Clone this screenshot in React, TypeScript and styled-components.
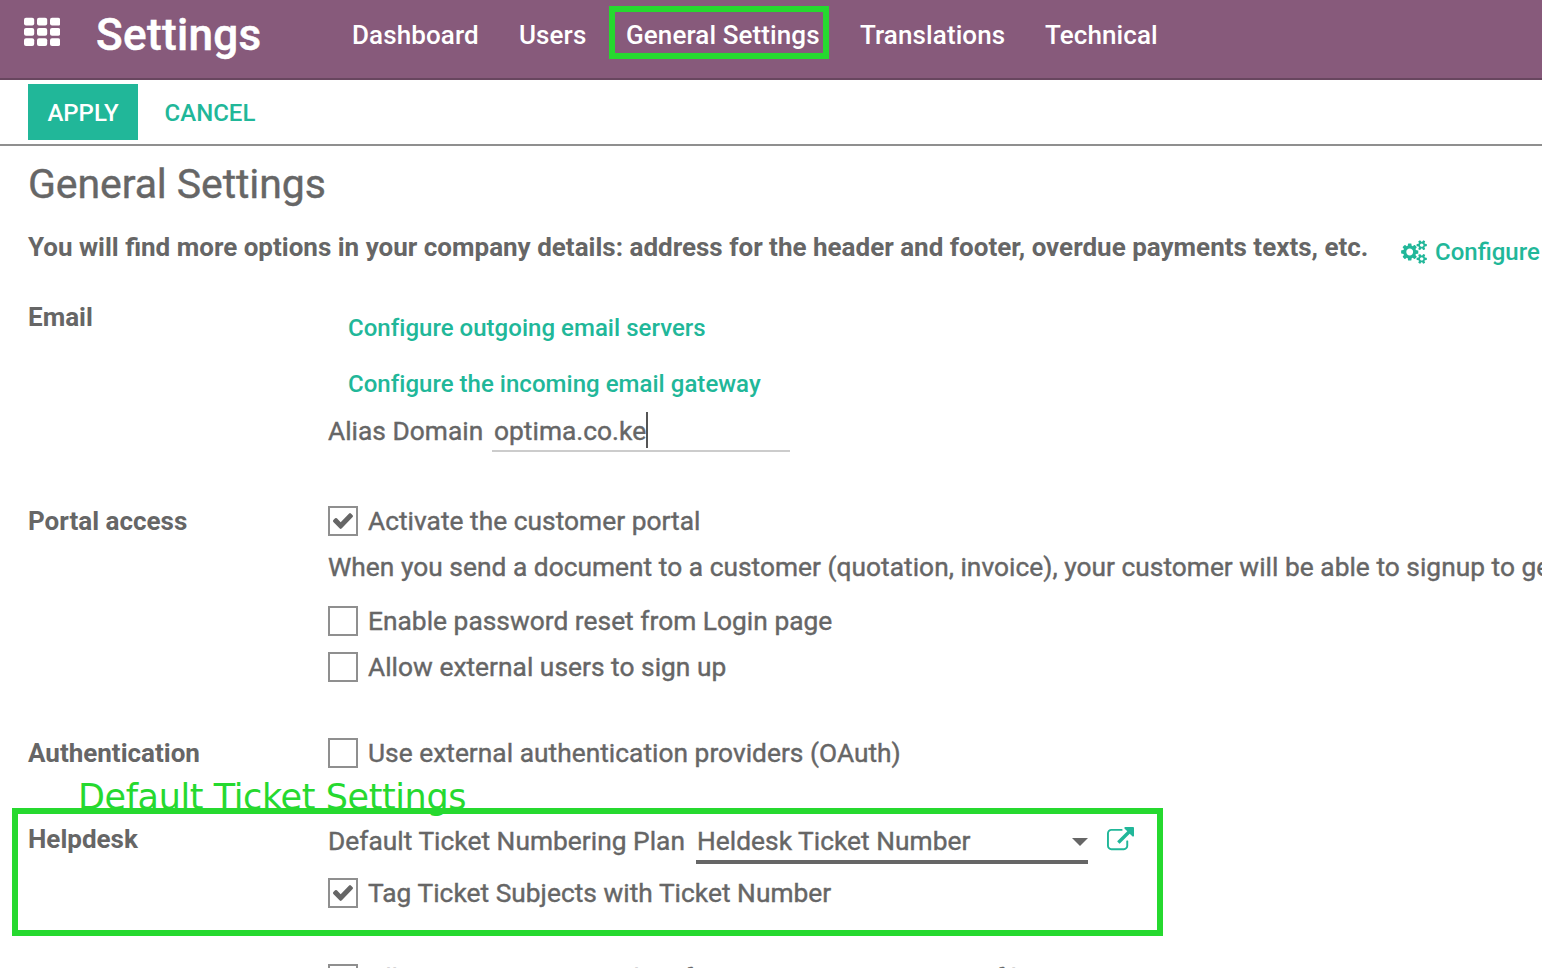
import React from 'react';
import styled, { createGlobalStyle } from 'styled-components';

const GREEN = '#26d92f';
const TEAL = '#21b799';
const GRAY = '#666666';

const GlobalStyle = createGlobalStyle`
  * { box-sizing: border-box; }
  html, body { margin: 0; padding: 0; overflow: hidden; background: #fff; }
  body { font-family: Roboto, "Liberation Sans", sans-serif; font-size: 26px; color: ${GRAY}; }
`;

const Page = styled.div`
  position: relative;
  width: 100%;
  height: 968px;
  overflow: hidden;
  background: #fff;
  line-height: 36px;
  white-space: nowrap;
`;

const NavBar = styled.header`
  display: flex;
  align-items: flex-start;
  height: 80px;
  padding: 17px 0 0 24px;
  background: #875a7b;
  border-bottom: 2px solid #68465f;
  color: #fff;
`;

const AppsIcon = styled.svg`
  display: block;
  width: 36px;
  height: 30px;
  margin-right: 36px;
  fill: #fff;
`;

const Brand = styled.div`
  width: 256px;
  font-size: 44px;
  font-weight: 500;
  letter-spacing: 0.35px;
  -webkit-text-stroke: 0.5px currentColor;
`;

const Menu = styled.nav`
  display: flex;
  gap: 40px;
`;

const MenuItem = styled.a<{ $width: number }>`
  position: relative;
  width: ${(p) => p.$width}px;
  font-weight: 500;
  letter-spacing: 0.1px;
`;

const MenuHighlight = styled.span`
  position: absolute;
  top: -11px;
  left: -17px;
  width: 220px;
  height: 53px;
  border: 6px solid ${GREEN};
`;

const ControlBar = styled.div`
  display: flex;
  align-items: flex-start;
  height: 66px;
  padding: 4px 0 0 28px;
  border-bottom: 2px solid #8f8f8f;
`;

const Button = styled.button<{ $primary?: boolean }>`
  height: 56px;
  width: ${(p) => (p.$primary ? '110px' : '144px')};
  padding: 2px 0 0;
  border: 0;
  font: 500 24px Roboto, sans-serif;
  text-align: center;
  background: ${(p) => (p.$primary ? TEAL : 'transparent')};
  color: ${(p) => (p.$primary ? '#fff' : TEAL)};
`;

const Sheet = styled.main`
  padding: 14px 0 0 28px;
`;

const Title = styled.h1`
  margin: 0;
  font-size: 41px;
  font-weight: 400;
  line-height: 48px;
  letter-spacing: -0.1px;
  -webkit-text-stroke: 0.4px currentColor;
`;

const InfoRow = styled.div`
  display: flex;
  height: 36px;
  margin: 21px 0 34px;
`;

const InfoText = styled.div`
  width: 1373px;
  font-weight: 700;
`;

const ConfigureLink = styled.a`
  display: flex;
  align-items: center;
  gap: 8px;
  margin-top: 5px;
  height: 36px;
  font-size: 24px;
  font-weight: 500;
  color: ${TEAL};
`;

const Section = styled.section<{ $after: number }>`
  display: grid;
  grid-template-columns: 300px 1fr;
  margin-bottom: ${(p) => p.$after}px;
`;

const Label = styled.div`
  font-weight: 700;
`;

const Fields = styled.div<{ $top?: number }>`
  display: flex;
  flex-direction: column;
  padding-top: ${(p) => p.$top ?? 0}px;
`;

const Row = styled.div<{ $gap?: number }>`
  display: flex;
  align-items: flex-start;
  margin-top: ${(p) => p.$gap ?? 0}px;
  font-size: 26.3px;
  letter-spacing: 0.03px;
  -webkit-text-stroke: 0.4px currentColor;
`;

const TextLink = styled.a<{ $gap?: number }>`
  margin: ${(p) => p.$gap ?? 0}px 0 0 20px;
  font-size: 24px;
  font-weight: 500;
  letter-spacing: 0.03px;
  color: ${TEAL};
`;

const FieldLabel = styled.span<{ $width: number }>`
  width: ${(p) => p.$width}px;
`;

const Input = styled.div`
  display: flex;
  width: 298px;
  height: 39px;
  padding-left: 2px;
  border-bottom: 2px solid #cccccc;
`;

const Caret = styled.span`
  width: 2px;
  height: 36px;
  margin-top: -1px;
  background: #555;
`;

const Select = styled.div`
  display: flex;
  justify-content: space-between;
  width: 392px;
  height: 41px;
  padding-left: 1px;
  border-bottom: 4px solid ${GRAY};
`;

const Arrow = styled.span`
  margin-top: 15px;
  width: 16px;
  height: 8px;
  background: ${GRAY};
  clip-path: polygon(0 0, 100% 0, 50% 100%);
`;

const Box = styled.span`
  display: flex;
  align-items: center;
  justify-content: center;
  width: 30px;
  height: 30px;
  margin: 3px 10px 0 0;
  border: 2px solid #8f8f8f;
`;

const CheckboxText = styled.span<{ $lineHeight: number }>`
  line-height: ${(p) => p.$lineHeight}px;
`;

const Glyph = styled.svg<{ $w: number; $h: number }>`
  display: block;
  width: ${(p) => p.$w}px;
  height: ${(p) => p.$h}px;
  fill: currentColor;
`;

const External = styled.span`
  margin: 4px 0 0 19px;
  color: ${TEAL};
`;

const HelpdeskHighlight = styled.div`
  position: absolute;
  left: 12px;
  top: 808px;
  width: 1151px;
  height: 128px;
  border: 6px solid ${GREEN};
`;

const HelpdeskNote = styled.div`
  position: absolute;
  left: 78px;
  top: 777px;
  font-family: "DejaVu Sans", sans-serif;
  font-size: 35px;
  line-height: 40px;
  letter-spacing: -0.4px;
  color: ${GREEN};
`;

const CHECK =
  'M1671 566q0 40-28 68l-724 724-136 136q-28 28-68 28t-68-28l-136-136-362-362q-28-28-28-68t28-68l136-136q28-28 68-28t68 28l294 295 656-657q28-28 68-28t68 28l136 136q28 28 28 68z';
const EXTERNAL =
  'M1408 928v320q0 119-84.5 203.5t-203.5 84.5h-832q-119 0-203.5-84.5t-84.5-203.5v-832q0-119 84.5-203.5t203.5-84.5h704q14 0 23 9t9 23v64q0 14-9 23t-23 9h-704q-66 0-113 47t-47 113v832q0 66 47 113t113 47h832q66 0 113-47t47-113v-320q0-14 9-23t23-9h64q14 0 23 9t9 23zm384-864v512q0 26-19 45t-45 19-45-19l-176-176-652 652q-10 10-23 10t-23-10l-114-114q-10-10-10-23t10-23l652-652-176-176q-19-19-19-45t19-45 45-19h512q26 0 45 19t19 45z';
const SMALL_COG =
  'v140q0 16-149 31-12 27-30 52 51 113 51 138 0 4-4 7-122 71-124 71-8 0-46-47t-52-68q-20 2-30 2t-30-2q-14 21-52 68t-46 47q-2 0-124-71-4-3-4-7 0-25 51-138-18-25-30-52-149-15-149-31v-140q0-16 149-31 13-29 30-52-51-113-51-138 0-4 4-7 4-2 35-20t59-34 30-16q8 0 46 46.5t52 67.5q20-2 30-2t30 2q51-71 92-112l6-2q4 0 124 70 4 3 4 7 0 25-51 138 17 23 30 52 149 15 149 31z';
const COGS =
  'M896 896q0-106-75-181t-181-75-181 75-75 181 75 181 181 75 181-75 75-181zm768 512q0-52-38-90t-90-38-90 38-38 90q0 53 37.5 90.5t90.5 37.5 90.5-37.5 37.5-90.5zm0-1024q0-52-38-90t-90-38-90 38-38 90q0 53 37.5 90.5t90.5 37.5 90.5-37.5 37.5-90.5zm-384 421v185q0 10-7 19.5t-16 10.5l-155 24q-11 35-32 76 34 48 90 115 7 11 7 20 0 12-7 19-23 30-82.5 89.5t-78.5 59.5q-11 0-21-7l-115-90q-37 19-77 31-11 108-23 155-7 24-30 24h-186q-11 0-20-7.5t-10-17.5l-23-153q-34-10-75-31l-118 89q-7 7-20 7-11 0-21-8-144-133-144-160 0-9 7-19 10-14 41-53t47-61q-23-44-35-82l-152-24q-10-1-17-9.5t-7-19.5v-185q0-10 7-19.5t16-10.5l155-24q11-35 32-76-34-48-90-115-7-11-7-20 0-12 7-20 22-30 82-89t79-59q11 0 21 7l115 90q34-18 77-32 11-108 23-154 7-24 30-24h186q11 0 20 7.5t10 17.5l23 153q34 10 75 31l118-89q8-7 20-7 11 0 21 8 144 133 144 160 0 8-7 19-12 16-42 54t-45 60q23 48 34 82l152 23q10 2 17 10.5t7 19.5zm640 533' +
  SMALL_COG +
  'm0-1024' +
  SMALL_COG;

interface CheckboxProps {
  checked?: boolean;
  gap?: number;
  lineHeight?: number;
  children: React.ReactNode;
}

function Checkbox({ checked, gap, lineHeight = 36, children }: CheckboxProps) {
  return (
    <Row $gap={gap}>
      <Box>
        {checked && (
          <Glyph $w={20} $h={16} viewBox="121 334 1550 1188" preserveAspectRatio="none">
            <path d={CHECK} />
          </Glyph>
        )}
      </Box>
      <CheckboxText $lineHeight={lineHeight}>{children}</CheckboxText>
    </Row>
  );
}

export default function App() {
  return (
    <Page>
      <GlobalStyle />
      <NavBar>
        <AppsIcon viewBox="0 0 36 30">
          {[0.8, 11, 21.2].map((y) =>
            [0, 13, 26].map((x) => <rect key={`${x}-${y}`} x={x} y={y} width="10.2" height="7.8" rx="2" />),
          )}
        </AppsIcon>
        <Brand>Settings</Brand>
        <Menu>
          <MenuItem $width={127}>Dashboard</MenuItem>
          <MenuItem $width={67}>Users</MenuItem>
          <MenuItem $width={194}>
            General Settings
            <MenuHighlight />
          </MenuItem>
          <MenuItem $width={145}>Translations</MenuItem>
          <MenuItem $width={112}>Technical</MenuItem>
        </Menu>
      </NavBar>
      <ControlBar>
        <Button $primary>APPLY</Button>
        <Button>CANCEL</Button>
      </ControlBar>
      <Sheet>
        <Title>General Settings</Title>
        <InfoRow>
          <InfoText>
            You will find more options in your company details: address for the header and footer, overdue payments
            texts, etc.
          </InfoText>
          <ConfigureLink>
            <Glyph $w={26} $h={24} viewBox="0 0 1920 1792">
              <path d={COGS} />
            </Glyph>
            Configure
          </ConfigureLink>
        </InfoRow>

        <Section $after={51}>
          <Label>Email</Label>
          <Fields $top={11}>
            <TextLink>Configure outgoing email servers</TextLink>
            <TextLink $gap={20}>Configure the incoming email gateway</TextLink>
            <Row $gap={11}>
              <FieldLabel $width={164}>Alias Domain</FieldLabel>
              <Input>
                optima.co.ke
                <Caret />
              </Input>
            </Row>
          </Fields>
        </Section>

        <Section $after={50}>
          <Label>Portal access</Label>
          <Fields>
            <Checkbox checked>Activate the customer portal</Checkbox>
            <Row $gap={10}>
              When you send a document to a customer (quotation, invoice), your customer will be able to signup to get
            </Row>
            <Checkbox gap={18}>Enable password reset from Login page</Checkbox>
            <Checkbox gap={10}>Allow external users to sign up</Checkbox>
          </Fields>
        </Section>

        <Section $after={50}>
          <Label>Authentication</Label>
          <Fields>
            <Checkbox>Use external authentication providers (OAuth)</Checkbox>
          </Fields>
        </Section>

        <Section $after={50}>
          <Label>Helpdesk</Label>
          <Fields $top={2}>
            <Row>
              <FieldLabel $width={368}>Default Ticket Numbering Plan</FieldLabel>
              <Select>
                Heldesk Ticket Number
                <Arrow />
              </Select>
              <External>
                <Glyph $w={27} $h={27} viewBox="0 0 1792 1792">
                  <path d={EXTERNAL} />
                </Glyph>
              </External>
            </Row>
            <Checkbox checked gap={11}>
              Tag Ticket Subjects with Ticket Number
            </Checkbox>
          </Fields>
        </Section>

        <Section $after={0}>
          <Label />
          <Fields>
            <Checkbox lineHeight={34}>Allow users to import data from CSV/XLS/XLSX/ODS files</Checkbox>
          </Fields>
        </Section>
      </Sheet>
      <HelpdeskNote>Default Ticket Settings</HelpdeskNote>
      <HelpdeskHighlight />
    </Page>
  );
}
